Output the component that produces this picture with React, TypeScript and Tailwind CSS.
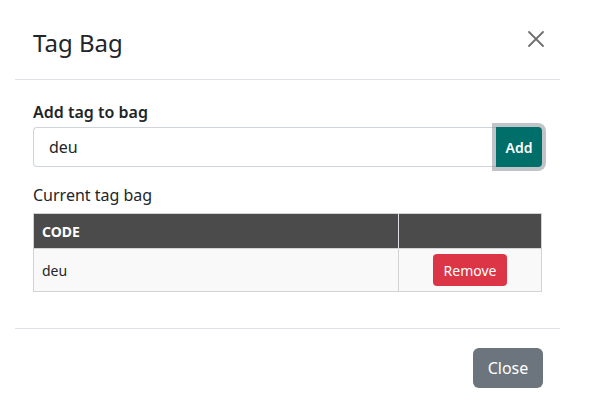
import { useState } from "react";

type TagRowProps = {
  code: string;
  onRemove: (code: string) => void;
};

function CloseIcon() {
  return (
    <svg width="16" height="16" viewBox="0 0 16 16" fill="none">
      <path d="M1 1L15 15M15 1L1 15" stroke="#6f6f6f" strokeWidth="1.8" strokeLinecap="round" />
    </svg>
  );
}

function TagRow({ code, onRemove }: TagRowProps) {
  return (
    <tr className="bg-[#f9f9f9]">
      <td className="h-[43px] border border-[#d3d3d3] pl-[8px] text-[14px] text-[#212529]">{code}</td>
      <td className="h-[43px] border border-[#d3d3d3] text-center">
        <button
          onClick={() => onRemove(code)}
          className="inline-flex h-[32px] w-[74px] items-center justify-center rounded-[4px] bg-[#dc3545] text-[14px] text-white"
        >
          Remove
        </button>
      </td>
    </tr>
  );
}

export default function App() {
  const [value, setValue] = useState("deu");
  const [tags, setTags] = useState<string[]>(["deu"]);

  function addTag() {
    if (value && !tags.includes(value)) setTags([...tags, value]);
  }

  return (
    <div className="h-[419px] w-full bg-white font-['Noto_Sans',sans-serif] text-[#212529]">
      <div className="ml-[15px] w-[545px]">
        {/* header */}
        <div className="flex h-[80px] items-start justify-between border-b border-[#dee2e6] pl-[18px] pr-[16px] pt-[25px]">
          <h1 className="text-[24px] leading-[36px] font-normal">Tag Bag</h1>
          <button className="mt-[6px]">
            <CloseIcon />
          </button>
        </div>

        {/* body */}
        <div className="px-[18px] pt-[20px] pb-[36px]">
          <label className="mb-[3px] block text-[16px] leading-[24px] font-semibold">Add tag to bag</label>
          <div className="flex h-[40px]">
            <input
              value={value}
              onChange={(e) => setValue(e.target.value)}
              className="h-[40px] flex-1 rounded-l-[4px] border border-r-0 border-[#ced4da] px-[15px] text-[16px] text-[#212529] outline-none"
            />
            <button
              onClick={addTag}
              className="relative z-10 h-[40px] w-[46px] rounded-r-[4px] bg-[#006e69] text-[14px] font-semibold text-white shadow-[0_0_0_4px_rgba(130,138,145,0.5)]"
            >
              Add
            </button>
          </div>

          <div className="mt-[16px] mb-[6px] text-[16px] leading-[24px]">Current tag bag</div>
          <table className="w-[509px] border-collapse border border-[#d3d3d3]">
            <thead>
              <tr className="bg-[#4b4b4b]">
                <th className="h-[35px] w-[365px] border-r border-[#dee2e6] pl-[8px] text-left text-[14px] font-bold text-white">
                  CODE
                </th>
                <th className="h-[35px]"></th>
              </tr>
            </thead>
            <tbody>
              {tags.map((t) => (
                <TagRow key={t} code={t} onRemove={(c) => setTags(tags.filter((x) => x !== c))} />
              ))}
            </tbody>
          </table>
        </div>

        {/* footer */}
        <div className="flex justify-end border-t border-[#dee2e6] pr-[17px] pt-[19px]">
          <button className="h-[40px] w-[70px] rounded-[6px] bg-[#6c757d] text-[16px] text-white">Close</button>
        </div>
      </div>
    </div>
  );
}
